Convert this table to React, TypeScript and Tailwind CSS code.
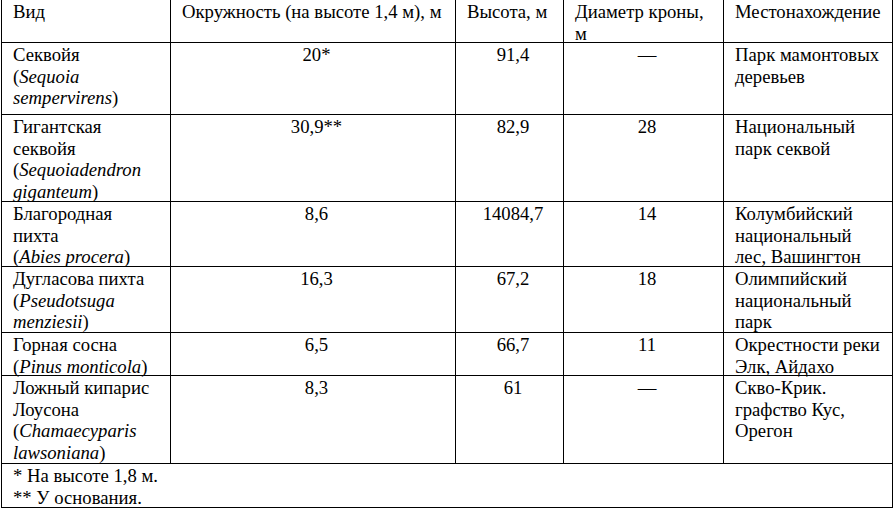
import React from "react";

type Row = {
  name: React.ReactNode;
  girth: string;
  height: string;
  crown: string;
  place: React.ReactNode;
};

const I = ({ children }: { children: React.ReactNode }) => <i className="italic">{children}</i>;

const rows: Row[] = [
  {
    name: (
      <>
        Секвойя
        <br />(<I>Sequoia</I>
        <br />
        <I>sempervirens</I>)
      </>
    ),
    girth: "20*",
    height: "91,4",
    crown: "—",
    place: (
      <>
        Парк мамонтовых
        <br />
        деревьев
      </>
    ),
  },
  {
    name: (
      <>
        Гигантская
        <br />
        секвойя
        <br />(<I>Sequoiadendron</I>
        <br />
        <I>giganteum</I>)
      </>
    ),
    girth: "30,9**",
    height: "82,9",
    crown: "28",
    place: (
      <>
        Национальный
        <br />
        парк секвой
      </>
    ),
  },
  {
    name: (
      <>
        Благородная
        <br />
        пихта
        <br />(<I>Abies procera</I>)
      </>
    ),
    girth: "8,6",
    height: "14084,7",
    crown: "14",
    place: (
      <>
        Колумбийский
        <br />
        национальный
        <br />
        лес, Вашингтон
      </>
    ),
  },
  {
    name: (
      <>
        Дугласова пихта
        <br />(<I>Pseudotsuga</I>
        <br />
        <I>menziesii</I>)
      </>
    ),
    girth: "16,3",
    height: "67,2",
    crown: "18",
    place: (
      <>
        Олимпийский
        <br />
        национальный
        <br />
        парк
      </>
    ),
  },
  {
    name: (
      <>
        Горная сосна
        <br />(<I>Pinus monticola</I>)
      </>
    ),
    girth: "6,5",
    height: "66,7",
    crown: "11",
    place: (
      <>
        Окрестности реки
        <br />
        Элк, Айдахо
      </>
    ),
  },
  {
    name: (
      <>
        Ложный кипарис
        <br />
        Лоусона
        <br />(<I>Chamaecyparis</I>
        <br />
        <I>lawsoniana</I>)
      </>
    ),
    girth: "8,3",
    height: "61",
    crown: "—",
    place: (
      <>
        Скво-Крик.
        <br />
        графство Кус,
        <br />
        Орегон
      </>
    ),
  },
];

const rowHeights = ["h-[72px]", "h-[87px]", "h-[65px]", "h-[66px]", "h-[43px]", "h-[88px]"];

export default function App() {
  const cell = "border-r border-b border-black pl-[11px] pr-1 pt-px whitespace-nowrap";
  return (
    <div className="w-[896px] h-[509px] bg-white text-black overflow-hidden text-[18.7px] leading-[21.5px] font-['Liberation_Serif','Times_New_Roman',serif]">
      <div className="ml-px mt-[-1px] w-[891px] border-l border-t border-black grid grid-cols-[169px_285px_108px_160px_169px]">
        <div className={`${cell} h-[43px]`}>Вид</div>
        <div className={`${cell} h-[43px]`}>Окружность (на высоте 1,4 м), м</div>
        <div className={`${cell} h-[43px]`}>Высота, м</div>
        <div className={`${cell} h-[43px] pl-[10px]`}>
          Диаметр кроны,
          <br />м
        </div>
        <div className={`${cell} h-[43px] pl-[10px]`}>Местонахождение</div>
        {rows.map((r, i) => (
          <React.Fragment key={i}>
            <div className={`${cell} ${rowHeights[i]}`}>{r.name}</div>
            <div className={`${cell} ${rowHeights[i]} text-center pl-0 pr-0`}>{r.girth}</div>
            <div className={`${cell} ${rowHeights[i]} text-center pl-0 pr-0`}>{r.height}</div>
            <div className={`${cell} ${rowHeights[i]} text-center pl-0 pr-0`}>{r.crown}</div>
            <div className={`${cell} ${rowHeights[i]} pl-[10px]`}>{r.place}</div>
          </React.Fragment>
        ))}
        <div className={`${cell} col-span-5 h-[44px]`}>
          * На высоте 1,8 м.
          <br />
          ** У основания.
        </div>
      </div>
    </div>
  );
}
